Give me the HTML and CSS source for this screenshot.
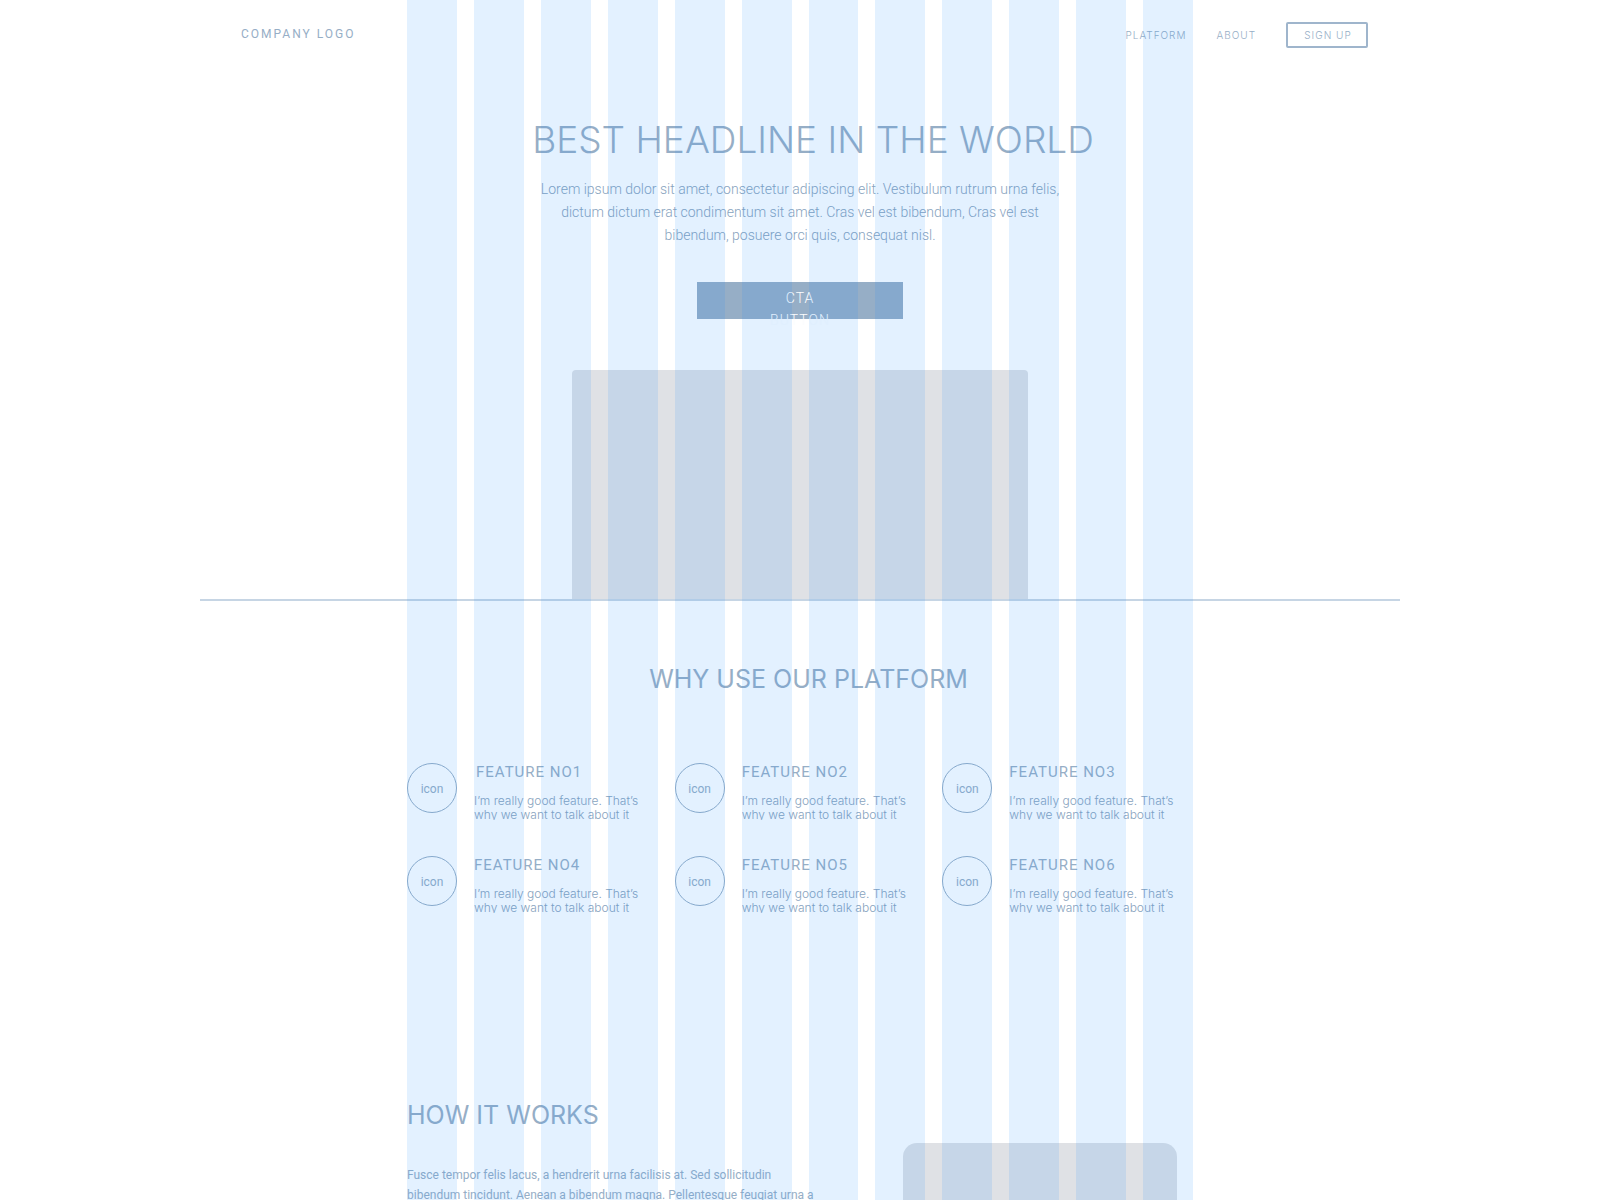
FILE: index.html
```html
<!DOCTYPE html>
<html lang="en">
<head>
<meta charset="utf-8">
<meta name="viewport" content="width=device-width, initial-scale=1">
<title>Company landing page wireframe</title>
<link rel="stylesheet" href="styles.css">
</head>
<body>
<div class="page">
  <header class="header">
    <a class="logo" href="#">COMPANY LOGO</a>
    <nav class="nav">
      <a href="#">PLATFORM</a>
      <a href="#">ABOUT</a>
      <button class="signup" type="button">SIGN UP</button>
    </nav>
  </header>
  <main>
    <section class="hero">
      <h1>BEST HEADLINE IN THE WORLD</h1>
      <p class="lead">Lorem ipsum dolor sit amet, consectetur adipiscing elit. Vestibulum rutrum urna felis, dictum dictum erat condimentum sit amet. Cras vel est bibendum, Cras vel est bibendum, posuere orci quis, consequat nisl.</p>
      <button class="cta" type="button">CTA<br>BUTTON</button>
      <div class="hero-image"></div>
    </section>
    <section class="why">
      <h2>WHY USE OUR PLATFORM</h2>
      <div class="features">
        <article class="feature"><div class="icon">icon</div><div><h3 class="first">FEATURE NO1</h3><p>I’m really good feature. That’s why we want to talk about it</p></div></article>
        <article class="feature"><div class="icon">icon</div><div><h3>FEATURE NO2</h3><p>I’m really good feature. That’s why we want to talk about it</p></div></article>
        <article class="feature"><div class="icon">icon</div><div><h3>FEATURE NO3</h3><p>I’m really good feature. That’s why we want to talk about it</p></div></article>
        <article class="feature"><div class="icon">icon</div><div><h3>FEATURE NO4</h3><p>I’m really good feature. That’s why we want to talk about it</p></div></article>
        <article class="feature"><div class="icon">icon</div><div><h3>FEATURE NO5</h3><p>I’m really good feature. That’s why we want to talk about it</p></div></article>
        <article class="feature"><div class="icon">icon</div><div><h3>FEATURE NO6</h3><p>I’m really good feature. That’s why we want to talk about it</p></div></article>
      </div>
    </section>
    <section class="how">
      <div class="how-text">
        <h2>HOW IT WORKS</h2>
        <p>Fusce tempor felis lacus, a hendrerit urna facilisis at. Sed sollicitudin bibendum tincidunt. Aenean a bibendum magna. Pellentesque feugiat urna a</p>
      </div>
      <div class="how-image"></div>
    </section>
  </main>
  <div class="guides" aria-hidden="true"><i></i><i></i><i></i><i></i><i></i><i></i><i></i><i></i><i></i><i></i><i></i><i></i></div>
</div>
</body>
</html>
```
FILE: styles.css
```css
:root {
  --ink: #96aec6;
  --block: #dfe1e5;
  --columns: 786px;
  --gutter: 17px;
}

* { box-sizing: border-box; }

body {
  margin: 0;
  background: #fff;
  color: var(--ink);
  font-family: Roboto, "Liberation Sans", sans-serif;
  font-size: 12px;
}

h1, h2, h3, p { margin: 0; font-weight: 400; }
a { color: inherit; text-decoration: none; }
button { font: inherit; color: inherit; cursor: pointer; }

.page {
  position: relative;
  height: 100vh;
  overflow: hidden;
}

.header {
  display: flex;
  justify-content: space-between;
  max-width: 1200px;
  margin: 0 auto;
  padding: 22px 32px 0 41px;
}

.logo {
  line-height: 24px;
  letter-spacing: 2px;
}

.nav {
  display: flex;
  align-items: center;
  gap: 30px;
  font-family: Inter, sans-serif;
  font-size: 10px;
  font-weight: 300;
  letter-spacing: 1px;
}

.signup {
  width: 82px;
  height: 26px;
  padding: 0 0 0 2px;
  border: 2px solid #9fb5cc;
  border-radius: 2px;
  background: none;
  letter-spacing: 1px;
}

.hero {
  display: flex;
  flex-direction: column;
  align-items: center;
  max-width: 1200px;
  margin: 0 auto;
  border-bottom: 2px solid #c6d5e4;
}

h1 {
  padding: 70px 0 0 26px;
  font-family: Inter, sans-serif;
  font-size: 37px;
  font-weight: 300;
  line-height: 44px;
}

.lead {
  max-width: 528px;
  margin-top: 16px;
  color: #88a3be;
  font-size: 14px;
  font-weight: 300;
  line-height: 23px;
  text-align: center;
}

.cta {
  width: 206px;
  height: 37px;
  margin-top: 35px;
  padding: 5px 0 0;
  border: 0;
  background: #96aec6;
  color: #fcfdfe;
  font-size: 14px;
  font-weight: 300;
  line-height: 22px;
  letter-spacing: 1px;
  display: flex;
  justify-content: center;
}

.hero-image {
  width: 456px;
  height: 229px;
  margin-top: 51px;
  border-radius: 4px 4px 0 0;
  background: var(--block);
}

.why, .how {
  max-width: var(--columns);
  margin: 0 auto;
}

h2 {
  font-family: Inter, sans-serif;
  font-size: 25px;
  line-height: 32px;
}

.why h2 {
  padding: 62px 0 0 17px;
  text-align: center;
}

.features {
  display: grid;
  grid-template-columns: repeat(3, 1fr);
  gap: 36px var(--gutter);
  margin-top: 68px;
}

.feature {
  display: flex;
  gap: var(--gutter);
}

.icon {
  display: grid;
  place-items: center;
  flex: none;
  width: 50px;
  height: 50px;
  padding-top: 2px;
  border: 1px solid var(--ink);
  border-radius: 50%;
}

h3 {
  font-size: 15px;
  line-height: 18px;
  letter-spacing: 1px;
}

h3.first { padding-left: 2px; }

.feature p {
  height: 26px;
  margin-top: 13px;
  overflow: hidden;
  color: #88a3be;
  font-family: Inter, sans-serif;
  font-weight: 300;
  line-height: 14px;
}

.how {
  display: flex;
  justify-content: space-between;
  margin-top: 186px;
  padding-right: 16px;
}

.how-text { width: 420px; }

.how-text p {
  margin-top: 34px;
  line-height: 20px;
}

.how-image {
  width: 274px;
  height: 180px;
  margin-top: 44px;
  border-radius: 14px;
  background: var(--block);
}

/* Twelve-column layout guides drawn over the page */
.guides {
  position: absolute;
  inset: 0;
  display: grid;
  grid-template-columns: repeat(12, 1fr);
  gap: var(--gutter);
  width: var(--columns);
  margin: 0 auto;
  pointer-events: none;
}

.guides i { background: rgba(22, 138, 255, 0.12); }
```
